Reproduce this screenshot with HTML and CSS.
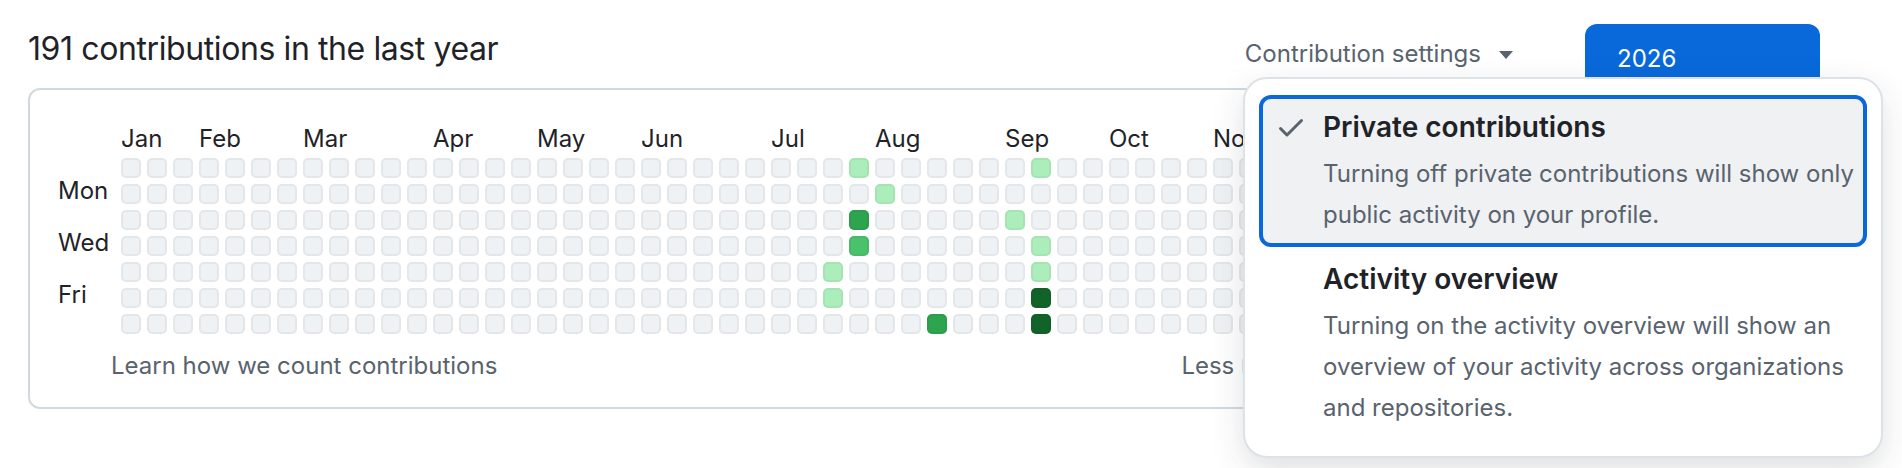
FILE: index.html
```html
<!DOCTYPE html>
<html lang="en">
<head>
  <meta charset="UTF-8" />
  <meta name="viewport" content="width=device-width, initial-scale=1.0"/>
  <title>Contributions</title>
  <link rel="stylesheet" href="styles.css">
</head>
<body>

  <div class="page">
    <div class="main">
      <div class="head">
        <h2 class="title">191 contributions in the last year</h2>
        <button class="settings">Contribution settings<span class="caret"></span></button>
      </div>

      <div class="box">
        <div class="graph">
          <div class="corner"></div>
          <div class="months" id="months"></div>
          <div class="days">
            <span></span><span>Mon</span><span></span><span>Wed</span><span></span><span>Fri</span><span></span>
          </div>
          <div class="cells" id="cells"></div>
        </div>
        <div class="foot">
          <a class="learn" href="#">Learn how we count contributions</a>
          <div class="legend">
            <span>Less</span>
            <span class="cell"></span>
            <span class="cell l1"></span>
            <span class="cell l2"></span>
            <span class="cell l3"></span>
            <span class="cell l4"></span>
            <span>More</span>
          </div>
        </div>
      </div>
    </div>

    <div class="years">
      <a class="year selected" href="#">2026</a>
      <a class="year" href="#">2025</a>
      <a class="year" href="#">2024</a>
      <a class="year" href="#">2023</a>
    </div>
  </div>

  <div class="menu">
    <div class="item selected">
      <span class="lead">
        <svg width="32" height="32" viewBox="0 0 16 16"><path d="M13.78 4.22a.75.75 0 0 1 0 1.06l-7.25 7.25a.75.75 0 0 1-1.06 0L2.22 9.28a.751.751 0 0 1 .018-1.042.751.751 0 0 1 1.042-.018L6 10.940l6.72-6.72a.75.75 0 0 1 1.06 0Z"></path></svg>
      </span>
      <div class="item-text">
        <div class="label">Private contributions</div>
        <div class="desc">Turning off private contributions will show only public activity on your profile.</div>
      </div>
    </div>
    <div class="item">
      <span class="lead"></span>
      <div class="item-text">
        <div class="label">Activity overview</div>
        <div class="desc">Turning on the activity overview will show an overview of your activity across organizations and repositories.</div>
      </div>
    </div>
  </div>

  <script>
    // week,day -> level
    const levels = {
      '28,0': 1, '35,0': 1,
      '29,1': 1,
      '28,2': 3, '34,2': 1,
      '28,3': 2, '35,3': 1,
      '27,4': 1, '35,4': 1,
      '27,5': 1, '35,5': 4,
      '31,6': 3, '35,6': 4
    };
    const months = [['Jan', 0], ['Feb', 3], ['Mar', 7], ['Apr', 12], ['May', 16], ['Jun', 20],
      ['Jul', 25], ['Aug', 29], ['Sep', 34], ['Oct', 38], ['Nov', 42], ['Dec', 47], ['Jan', 51]];

    const cells = document.getElementById('cells');
    for (let w = 0; w < 53; w++) {
      for (let d = 0; d < 7; d++) {
        const cell = document.createElement('span');
        cell.className = 'cell';
        const level = levels[w + ',' + d];
        if (level) cell.classList.add('l' + level);
        cells.appendChild(cell);
      }
    }

    const monthRow = document.getElementById('months');
    months.forEach(([name, week]) => {
      const label = document.createElement('span');
      label.textContent = name;
      label.style.gridColumnStart = week + 1;
      monthRow.appendChild(label);
    });
  </script>

</body>
</html>
```

FILE: styles.css
```css
* {
  box-sizing: border-box;
}
body {
  margin: 0;
  background: #fff;
  color: #1f2328;
  font-family: Inter, "Liberation Sans", sans-serif;
}
a {
  text-decoration: none;
  color: inherit;
}
.page {
  display: flex;
  gap: 40px;
  padding: 24px 0 0 28px;
}
.main {
  width: 1517px;
  flex: none;
}
.head {
  display: flex;
  justify-content: space-between;
  align-items: flex-start;
  height: 64px;
}
.title {
  margin: 0;
  font-size: 32px;
  font-weight: 400;
  line-height: 50px;
  letter-spacing: -0.4px;
}
.settings {
  display: flex;
  align-items: center;
  background: none;
  border: none;
  padding: 15px 32px 0 0;
  font-family: inherit;
  font-size: 24px;
  line-height: 30px;
  color: #59636e;
}
.caret {
  width: 0;
  height: 0;
  margin-left: 18px;
  margin-top: 2px;
  border-left: 7.5px solid transparent;
  border-right: 7.5px solid transparent;
  border-top: 8px solid #59636e;
}
.box {
  border: 2px solid #d1d9e0;
  border-radius: 12px;
  padding: 34px 28px 26px 28px;
}
.graph {
  display: grid;
  grid-template-columns: 56px auto;
  grid-template-rows: 30px auto;
  column-gap: 7px;
  row-gap: 4px;
}
.months {
  display: grid;
  grid-template-columns: repeat(53, 20px);
  column-gap: 6px;
  font-size: 24px;
  line-height: 30px;
  white-space: nowrap;
}
.months span {
  grid-row: 1;
}
.days {
  display: grid;
  grid-template-rows: repeat(7, 20px);
  row-gap: 6px;
  font-size: 24px;
  line-height: 14px;
}
.cells {
  display: grid;
  grid-template-rows: repeat(7, 20px);
  grid-auto-flow: column;
  grid-auto-columns: 20px;
  gap: 6px;
  justify-content: start;
}
.cell {
  display: block;
  width: 20px;
  height: 20px;
  border-radius: 5px;
  background: #eff2f5;
  box-shadow: inset 0 0 0 2px rgba(31, 35, 40, 0.05);
}
.cell.l1 { background: #aceebb; }
.cell.l2 { background: #4ac26b; }
.cell.l3 { background: #2da44e; }
.cell.l4 { background: #116329; }
.foot {
  display: flex;
  align-items: center;
  margin-top: 17px;
  font-size: 24px;
  line-height: 30px;
  color: #59636e;
}
.learn {
  margin-left: 53px;
}
.legend {
  display: flex;
  align-items: center;
  gap: 6px;
  margin-left: auto;
  margin-right: 82px;
}
.legend span:first-child {
  margin-right: 2px;
}
.legend span:last-child {
  margin-left: 2px;
}
.years {
  width: 235px;
  display: flex;
  flex-direction: column;
  gap: 8px;
}
.year {
  display: block;
  height: 68px;
  padding: 20px 32px 0;
  border-radius: 12px;
  font-size: 24px;
  line-height: 30px;
  color: #59636e;
}
.year.selected {
  background: #0969da;
  color: #fff;
}
.menu {
  position: absolute;
  left: 1243px;
  top: 77px;
  width: 640px;
  padding: 16px 14px;
  background: #fff;
  border: 2px solid #dde2e7;
  border-radius: 24px;
  box-shadow: 0 12px 24px -6px rgba(37, 41, 46, 0.04), 0 12px 36px rgba(37, 41, 46, 0.12);
}
.item {
  display: flex;
  border: 4px solid transparent;
  border-radius: 12px;
  padding: 8px 2px 8px 12px;
}
.item.selected {
  border-color: #0969da;
  background: #eff1f3;
}
.lead {
  flex: none;
  width: 32px;
  height: 40px;
  margin-right: 16px;
  display: flex;
  align-items: center;
}
.lead svg {
  fill: #59636e;
}
.label {
  font-size: 28px;
  line-height: 40px;
  font-weight: 600;
}
.desc {
  margin-top: 6px;
  font-size: 24px;
  line-height: 41px;
  color: #59636e;
}
```
